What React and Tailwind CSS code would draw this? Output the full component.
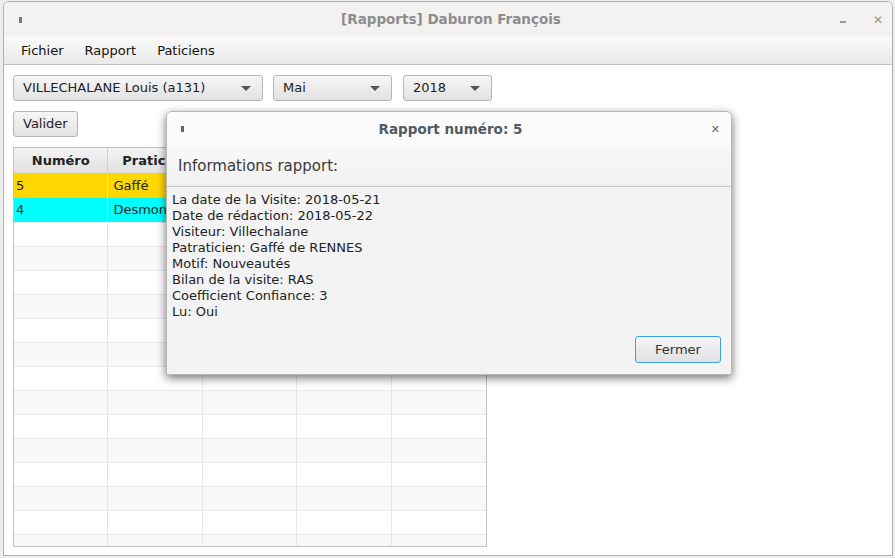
import React from 'react';

const cols = ['Numéro', 'Praticien', '', '', ''];

const rows = [
  { bg: 'bg-[#ffd700]', cells: ['5', 'Gaffé'] },
  { bg: 'bg-[#00ffff]', cells: ['4', 'Desmontiers'] },
];

const Combo = ({ label, w }) => (
  <div className={`${w} h-[26px] flex items-center justify-between pl-[9px] pr-[11px] rounded-[3px] border border-[#b5b5b5] bg-gradient-to-b from-[#f6f6f6] to-[#e2e2e2] text-[13px] text-[#222]`}>
    <span>{label}</span>
    <span className="w-0 h-0 border-l-[5px] border-r-[5px] border-t-[5px] border-l-transparent border-r-transparent border-t-[#555]" />
  </div>
);

const App = () => {
  const empty = Array.from({ length: 14 });
  return (
    <div className="w-[895px] h-[558px] bg-[#ededed] overflow-hidden relative" style={{ fontFamily: '"DejaVu Sans", sans-serif' }}>
      <div className="ml-[3px] mt-[1px] w-[890px] h-[555px] bg-white rounded-t-[6px] border border-[#b0b0b0] flex flex-col overflow-hidden">
        {/* title bar */}
        <div className="h-[35px] bg-[#f3f2f1] grid grid-cols-[1fr_auto_1fr] items-center pl-[15px] pr-[9px]">
          <span className="w-[3px] h-[6px] bg-[#777]" />
          <div className="text-center font-bold text-[13.5px] text-[#8d8d8d]">[Rapports] Daburon François</div>
          <div className="flex items-center justify-end">
            <span className="w-[6px] h-[2px] bg-[#999] mr-[27px] mt-[4px]" />
            <span className="text-[#999] text-[12px] font-bold leading-none">✕</span>
          </div>
        </div>
        {/* menu */}
        <div className="h-[28px] bg-gradient-to-b from-[#fafafa] to-[#e9e9e9] border-b border-[#c2c2c2] flex items-center gap-[21px] pl-[17px] pt-[1px] text-[13px] text-[#111]">
          <span>Fichier</span>
          <span>Rapport</span>
          <span>Paticiens</span>
        </div>
        {/* content */}
        <div className="flex-1 px-[9px] pt-[10px] flex flex-col">
          <div className="flex gap-[10px]">
            <Combo label="VILLECHALANE Louis (a131)" w="w-[250px]" />
            <Combo label="Mai" w="w-[119px]" />
            <div className="ml-[1px]"><Combo label="2018" w="w-[89px]" /></div>
          </div>
          <div className="mt-[10px]">
            <button className="h-[26px] px-[9px] rounded-[3px] border border-[#b5b5b5] bg-gradient-to-b from-[#f6f6f6] to-[#e2e2e2] text-[13px] text-[#222]">Valider</button>
          </div>
          <div className="mt-[10px] w-[474px] h-[400px] border border-[#c3c3c3] overflow-hidden">
            <div className="grid grid-cols-5 h-[26px] bg-gradient-to-b from-[#f4f4f4] to-[#e1e1e1] border-b border-[#c8c8c8]">
              {cols.map((c, i) => (
                <div key={i} className={`flex items-center justify-center font-bold text-[13px] text-[#222] ${i < 4 ? 'border-r border-[#d0d0d0]' : ''}`}>{c}</div>
              ))}
            </div>
            {rows.map((r, i) => (
              <div key={i} className={`grid grid-cols-5 h-[24px] ${r.bg}`}>
                {[0, 1, 2, 3, 4].map((j) => (
                  <div key={j} className={`flex items-center text-[13px] text-[#222] ${j < 4 ? 'border-r border-[#e6e6e6]' : ''} ${j === 0 ? 'pl-[2px]' : 'pl-[5px]'}`}>{r.cells[j] || ''}</div>
                ))}
              </div>
            ))}
            {empty.map((_, i) => (
              <div key={i} className={`grid grid-cols-5 h-[24px] border-t border-[#e9e9e9] ${i % 2 === 0 ? 'bg-white' : 'bg-[#f8f8f8]'}`}>
                {[0, 1, 2, 3, 4].map((j) => (
                  <div key={j} className={j < 4 ? 'border-r border-[#e6e6e6]' : ''} />
                ))}
              </div>
            ))}
          </div>
        </div>
      </div>

      {/* dialog */}
      <div className="absolute left-[166px] top-[111px] w-[566px] h-[264px] rounded-t-[6px] bg-[#f3f3f3] border border-[#b8b8b8] shadow-[0_3px_10px_rgba(0,0,0,0.55)] flex flex-col overflow-hidden">
        <div className="h-[34px] bg-[#fbfbfb] grid grid-cols-[1fr_auto_1fr] items-center pl-[14px] pr-[11px]">
          <span className="w-[3px] h-[6px] bg-[#666]" />
          <div className="text-center font-bold text-[13.5px] text-[#4f5a63]">Rapport numéro: 5</div>
          <span className="text-[#666] text-[11px] font-bold leading-none text-right">✕</span>
        </div>
        <div className="h-[41px] bg-gradient-to-b from-[#f8f8f8] to-[#f1f1f1] border-b border-[#c6c6c6] flex items-center pl-[11px] text-[15px] text-[#3a3a3a]">
          Informations rapport:
        </div>
        <div className="flex-1 pt-[5px] pl-[5px] text-[13px] leading-[16px] text-[#222] flex flex-col">
          <div>La date de la Visite: 2018-05-21</div>
          <div>Date de rédaction: 2018-05-22</div>
          <div>Visiteur: Villechalane</div>
          <div>Patraticien: Gaffé de RENNES</div>
          <div>Motif: Nouveautés</div>
          <div>Bilan de la visite: RAS</div>
          <div>Coefficient Confiance: 3</div>
          <div>Lu: Oui</div>
          <div className="flex justify-end mt-auto mb-[11px] pr-[10px]">
            <button className="w-[86px] h-[27px] rounded-[3px] border border-[#39a4dc] bg-gradient-to-b from-[#f6f6f6] to-[#e0e0e0] text-[13px] text-[#333]">Fermer</button>
          </div>
        </div>
      </div>
    </div>
  );
};

export default App;
